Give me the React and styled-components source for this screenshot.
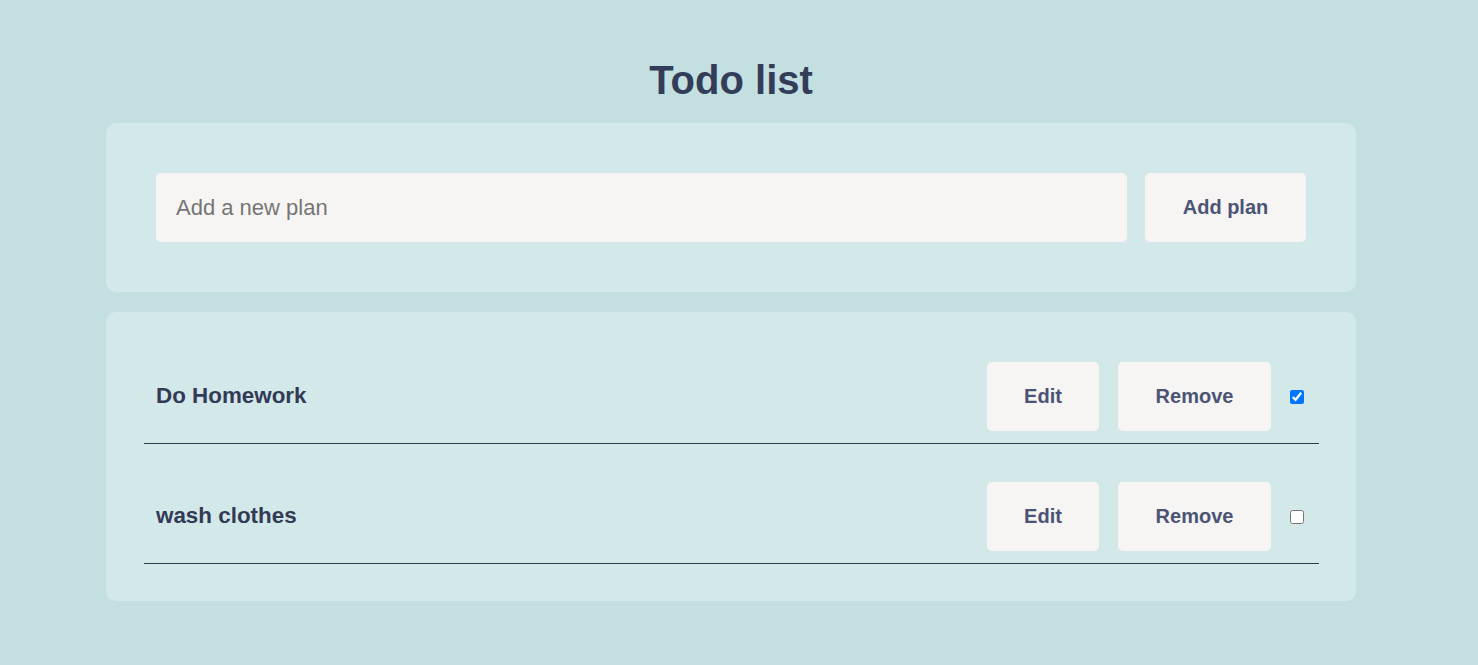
import React, { useState } from 'react'
import styled, { createGlobalStyle } from 'styled-components'

const GlobalStyle = createGlobalStyle`
  html, body {
    margin: 0;
    padding: 0;
    min-height: 100%;
    background-color: #c4dfe0;
    font-family: "Liberation Sans", Arial, sans-serif;
  }
`
const Page = styled.div`
  width: calc(100% - 16px);
  padding-top: 57px;
  display: flex;
  flex-direction: column;
  align-items: center;
`
const Title = styled.h1`
  margin: 0 0 20px;
  font-size: 40px;
  font-weight: 700;
  line-height: 46px;
  color: #333d59;
`
const Card = styled.div`
  box-sizing: border-box;
  width: 1250px;
  background-color: #d2e8e9;
  border-radius: 10px;
  padding: ${(p) => p.padding || '50px'};
  margin-bottom: 20px;
`
const Form = styled.form`
  display: flex;
  gap: 18px;
`
const Input = styled.input`
  flex: 1;
  height: 69px;
  box-sizing: border-box;
  border: none;
  border-radius: 5px;
  background-color: #f6f5f3;
  padding: 0 20px;
  font-family: inherit;
  font-size: 22px;
  color: #333d59;
  outline: none;
  &::placeholder {
    color: #757575;
  }
`
const Button = styled.button`
  height: 69px;
  width: ${(p) => p.width};
  box-sizing: border-box;
  border: none;
  border-radius: 5px;
  background-color: #f6f5f3;
  font-family: inherit;
  font-size: 20px;
  font-weight: 700;
  color: #4b5474;
  cursor: pointer;
`
const List = styled.ul`
  list-style: none;
  margin: 0;
  padding: 0;
  display: flex;
  flex-direction: column;
  gap: 26px;
`
const Row = styled.li`
  display: flex;
  align-items: center;
  padding: 12px 15px 12px 12px;
  border-bottom: 1px solid #2d3b4a;
`
const Text = styled.span`
  flex: 1;
  font-size: 22.4px;
  font-weight: 700;
  color: #333a55;
  margin-top: -2px;
`
const Actions = styled.div`
  display: flex;
  align-items: center;
  gap: 19px;
`
const Check = styled.input`
  width: 14px;
  height: 14px;
  margin: 0;
`

const initialPlans = [
  { id: 1, text: 'Do Homework', done: true },
  { id: 2, text: 'wash clothes', done: false },
]

export default function App() {
  const [plans, setPlans] = useState(initialPlans)
  const [value, setValue] = useState('')

  function addPlan(e) {
    e.preventDefault()
    if (!value.trim()) return
    setPlans((prev) => [...prev, { id: Date.now(), text: value, done: false }])
    setValue('')
  }

  return (
    <>
      <GlobalStyle />
      <Page>
        <Title>Todo list</Title>
        <Card>
          <Form onSubmit={addPlan}>
            <Input placeholder="Add a new plan" value={value} onChange={(e) => setValue(e.target.value)} />
            <Button width="161px" type="submit">Add plan</Button>
          </Form>
        </Card>
        <Card padding="38px 37px 37px 38px">
          <List>
            {plans.map((plan) => (
              <Row key={plan.id}>
                <Text>{plan.text}</Text>
                <Actions>
                  <Button width="112px">Edit</Button>
                  <Button width="153px" onClick={() => setPlans((prev) => prev.filter((p) => p.id !== plan.id))}>Remove</Button>
                  <Check
                    type="checkbox"
                    checked={plan.done}
                    onChange={() => setPlans((prev) => prev.map((p) => (p.id === plan.id ? { ...p, done: !p.done } : p)))}
                  />
                </Actions>
              </Row>
            ))}
          </List>
        </Card>
      </Page>
    </>
  )
}
